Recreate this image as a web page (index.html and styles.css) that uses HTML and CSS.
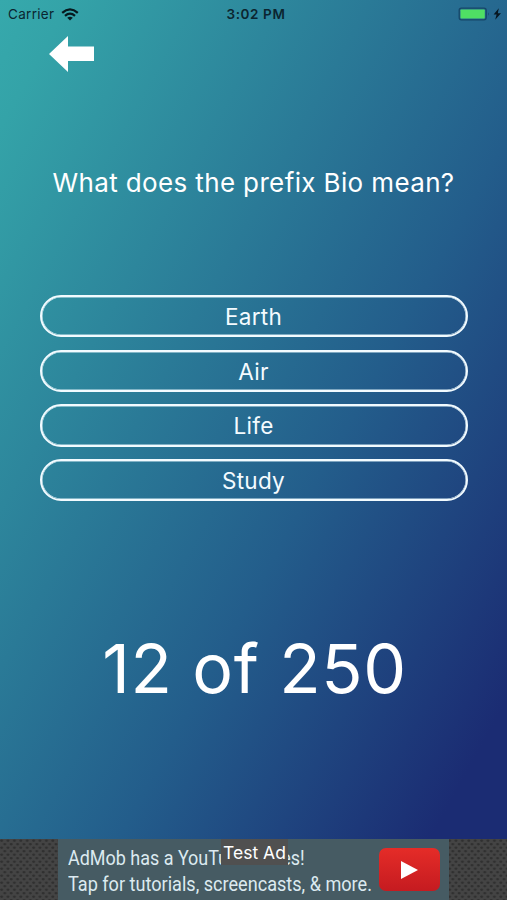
FILE: index.html
```html
<!DOCTYPE html>
<html lang="en">
<head>
<meta charset="utf-8">
<title>Prefix Quiz</title>
<link rel="stylesheet" href="styles.css">
</head>
<body>
<div class="screen">
  <header class="status">
    <div class="network"><span class="carrier">Carrier</span>
      <svg class="wifi" viewBox="0 0 18 13" width="18" height="13"><g fill="none" stroke="currentColor" stroke-width="2.3"><path d="M1.2 4.8Q9-2 16.8 4.8"/><path d="M4 7.8Q9 3.5 14 7.8"/></g><path d="M6.2 9.8Q9 7.6 11.8 9.8L9 12.5Z" fill="currentColor"/></svg>
    </div>
    <span class="time">3:02 PM</span>
    <div class="power">
      <svg viewBox="0 0 44 14" width="44" height="14"><rect x="1.2" y="1.2" width="27" height="11.6" rx="2.2" fill="none" stroke="#174768" stroke-width="1.3"/><rect x="2.5" y="2.5" width="24.3" height="9" rx=".8" fill="#4fdf64"/><path d="M30.2 5.2Q31.8 7 30.2 8.8Z" fill="#174768"/><path d="M40.8 1.2 35.6 7.6H38.6L37.2 12.8 43 6.2H39.8Z" fill="#071620"/></svg>
    </div>
  </header>
  <nav class="nav">
    <a class="back" href="#" aria-label="Back"><svg viewBox="0 0 45 36" width="45" height="36"><path d="M0 18 19 0V10.5H45V25H19V36Z" fill="#fff"/></svg></a>
  </nav>
  <main class="quiz">
    <h1 class="question">What does the prefix Bio mean?</h1>
    <div class="answers">
      <button class="answer">Earth</button>
      <button class="answer">Air</button>
      <button class="answer">Life</button>
      <button class="answer">Study</button>
    </div>
    <p class="progress">12 of 250</p>
  </main>
  <footer class="ad">
    <svg class="texture" width="507" height="61"><defs><pattern id="mesh" width="6.4" height="7" patternUnits="userSpaceOnUse"><rect width="6.4" height="7" fill="#444"/><ellipse cx="1.6" cy="1.75" rx="1.55" ry="1.15" fill="#303030"/><ellipse cx="4.8" cy="5.25" rx="1.55" ry="1.15" fill="#303030"/></pattern></defs><rect width="507" height="61" fill="url(#mesh)"/></svg>
    <div class="banner">
      <div class="copy"><span class="line line-one">AdMob has a YouTube series!</span><span class="line line-two">Tap for tutorials, screencasts, &amp; more.</span></div>
      <div class="play"><svg viewBox="0 0 17 18" width="17" height="18"><path d="M0 0 17 9 0 18Z" fill="#fff"/></svg></div>
    </div>
    <span class="tag">Test Ad</span>
  </footer>
</div>
</body>
</html>
```

FILE: styles.css
```css
* { box-sizing: border-box; }
body { margin: 0; font-family: Inter, "Liberation Sans", sans-serif; }
.screen {
  width: 507px;
  height: 900px;
  display: flex;
  flex-direction: column;
  overflow: hidden;
  color: #fff;
  background: linear-gradient(119deg, #36a9ac 0%, #34a3a8 7%, #235d8b 58%, #1b2c73 89%, #1b2c73 100%);
}
.status {
  height: 28px;
  padding: 0 5px 0 8px;
  display: grid;
  grid-template-columns: 1fr auto 1fr;
  align-items: center;
  color: #0b2530;
}
.network { display: flex; align-items: center; gap: 7px; }
.carrier { font-size: 13.5px; line-height: 16px; letter-spacing: .3px; }
.wifi { color: #06191e; }
.time { font-size: 13.5px; font-weight: 600; letter-spacing: .6px; margin-left: 2px; }
.power { display: flex; justify-content: flex-end; }
.nav { height: 68px; padding: 8px 0 0 49px; }
.back { display: block; width: 45px; height: 36px; }
.quiz { flex: 1; display: flex; flex-direction: column; align-items: center; }
.question {
  margin: 71px 0 0;
  font-size: 26px;
  line-height: 32px;
  font-weight: 400;
  letter-spacing: .37px;
  white-space: nowrap;
}
.answers {
  width: 428px;
  margin-top: 96px;
  display: grid;
  gap: 12.5px;
}
.answer {
  height: 42.2px;
  padding: 2px 0 0;
  border: 2px solid #f2fbff;
  border-radius: 21.1px;
  box-shadow: inset 0 0 0 .5px #d9edf5;
  background: none;
  color: #f4fbff;
  font: 400 22.5px/36px Inter, "Liberation Sans", sans-serif;
  letter-spacing: .3px;
}
.progress {
  margin: 126px 0 0 2px;
  font-size: 68px;
  line-height: 82px;
  font-weight: 400;
  letter-spacing: .6px;
}
.ad {
  position: relative;
  height: 61px;
  display: flex;
  justify-content: center;
  background: #3b3b3b;
}
.texture { position: absolute; inset: 0; }
.banner {
  position: relative;
  width: 391px;
  padding: 6px 9px 0 10px;
  display: flex;
  justify-content: space-between;
  background: #465b63;
}
.copy { width: 304px; font-family: Roboto, sans-serif; color: #dceaf0; }
.line {
  display: block;
  width: max-content;
  font-size: 21px;
  line-height: 26px;
  transform: scaleX(.862);
  transform-origin: left;
}
.line-one { transform: scaleX(.855); }
.play {
  margin-top: 3px;
  width: 61px;
  height: 43px;
  flex: none;
  border-radius: 7px;
  display: grid;
  place-items: center;
  background: linear-gradient(#e52c28, #c51b20);
}
.tag {
  position: absolute;
  left: 221px;
  top: 0;
  width: 67px;
  height: 26px;
  text-align: center;
  white-space: nowrap;
  background: #505050;
  font-size: 17.5px;
  line-height: 27px;
}
```
